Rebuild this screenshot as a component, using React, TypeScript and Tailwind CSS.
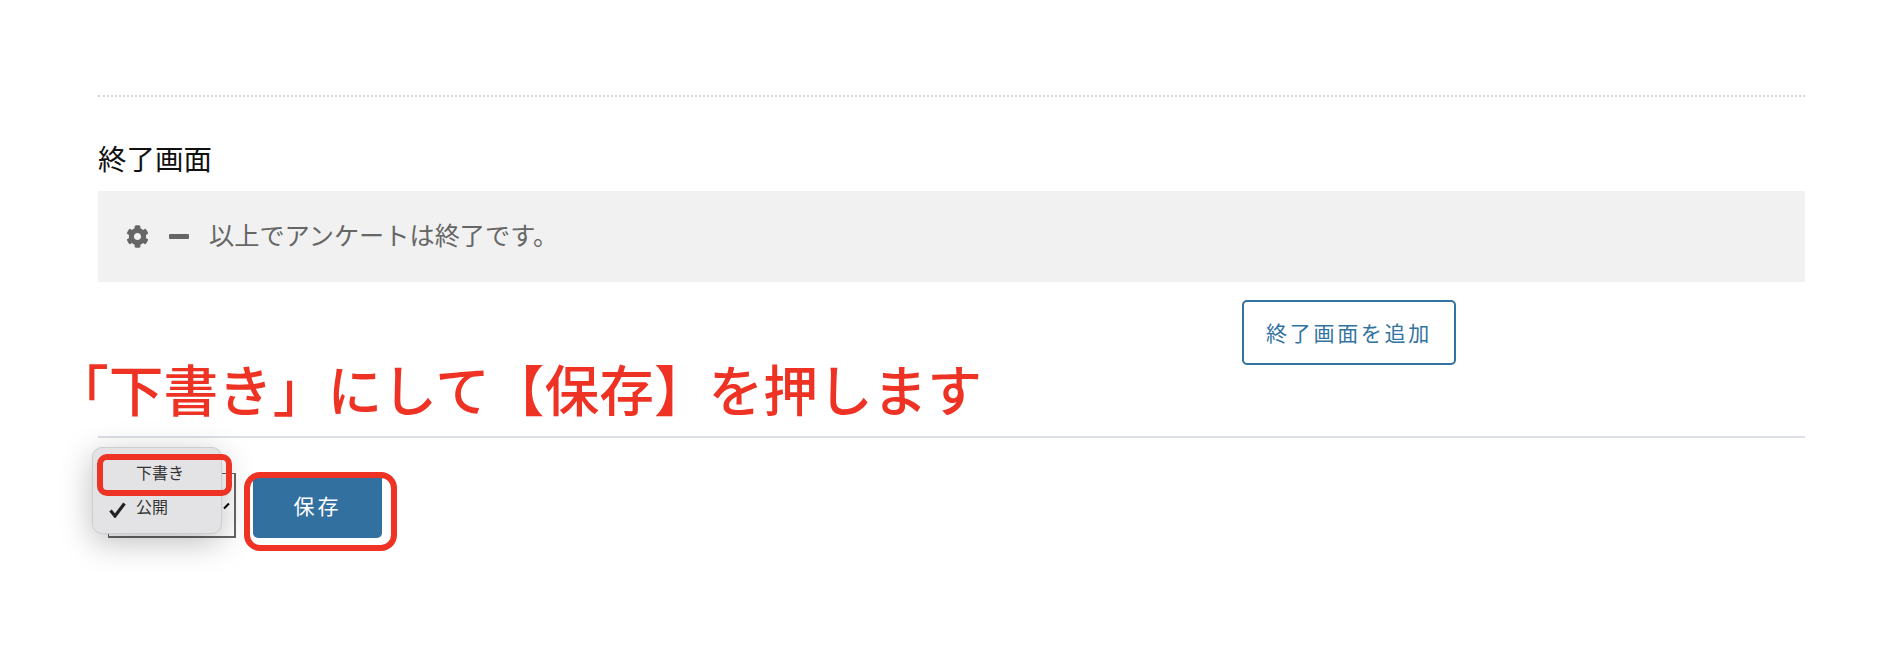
import { FaCog } from "react-icons/fa";

const jp = "font-['Noto_Sans_CJK_JP','Noto_Sans',sans-serif]";

function DraftMenu() {
  return (
    <div className="absolute left-[-6px] top-[-26px] h-[87px] w-[130px] rounded-[10px] border border-[#cdcdcd] bg-[#e3e3e5] shadow-[0_8px_32px_rgba(0,0,0,0.26)]">
      <div className="absolute left-[43px] top-[12px] text-[16px] leading-[24px] text-[#333]">下書き</div>
      <div className="absolute left-[43px] top-[46px] text-[16px] leading-[24px] text-[#333]">公開</div>
      <svg className="absolute left-[16px] top-[54px]" width="17" height="16" viewBox="0 0 17 16" fill="none">
        <path d="M1.5 8.5 L6 14 L15.5 1.5" stroke="#222" strokeWidth="3.2" />
      </svg>
    </div>
  );
}

export default function App() {
  return (
    <div className={`relative h-[664px] w-[1894px] overflow-hidden bg-white ${jp}`}>
      <div className="pl-[98px] pr-[89px] pt-[95px]">
        <div className="border-t-2 border-dotted border-[#d4d4d4]" />

        <h2 className="mt-[41px] text-[28.5px] leading-[40px] text-[#111]">終了画面</h2>

        <div className="mt-[13px] flex h-[91px] items-center bg-[#f1f1f1] pl-[28px] text-[#666]">
          <FaCog className="text-[23px]" />
          <div className="ml-[20px] h-[5px] w-[20px] rounded-[1px] bg-[#666]" />
          <span className="mb-[3px] ml-[20px] text-[25.2px]">以上でアンケートは終了です。</span>
        </div>

        <div className="mt-[18px] pl-[1144px]">
          <button className="h-[65px] w-[214px] rounded-[5px] border-2 border-[#32739f] bg-white text-[21px] tracking-[2.7px] text-[#32739f]">
            終了画面を追加
          </button>
        </div>

        <div className="mt-[71px] border-t-2 border-[#dcdfe6]" />

        <div className="relative mt-[35px] flex items-start pl-[10px]">
          <div className="relative h-[65px] w-[128px] border-b-2 border-r-2 border-t border-l border-[#666]">
            <div className="absolute left-[114px] top-[31px] h-[2px] w-[7px] -rotate-45 bg-black" />
          </div>
          <button className="ml-[17px] h-[65px] w-[129px] rounded-[5px] bg-[#32709f] text-[21px] tracking-[3px] text-white">
            保存
          </button>
          <DraftMenu />
        </div>
      </div>

      <div className="absolute left-[54px] top-[355px] whitespace-nowrap text-[54.7px] font-medium leading-[66px] text-[#ee3224]">
        「下書き」にして【保存】を押します
      </div>
      <div className="absolute left-[97px] top-[454px] h-[42px] w-[135px] rounded-[10px] border-[6px] border-[#ee3224]" />
      <div className="absolute left-[244px] top-[472px] h-[79px] w-[153px] rounded-[16px] border-[6px] border-[#ee3224]" />
    </div>
  );
}
